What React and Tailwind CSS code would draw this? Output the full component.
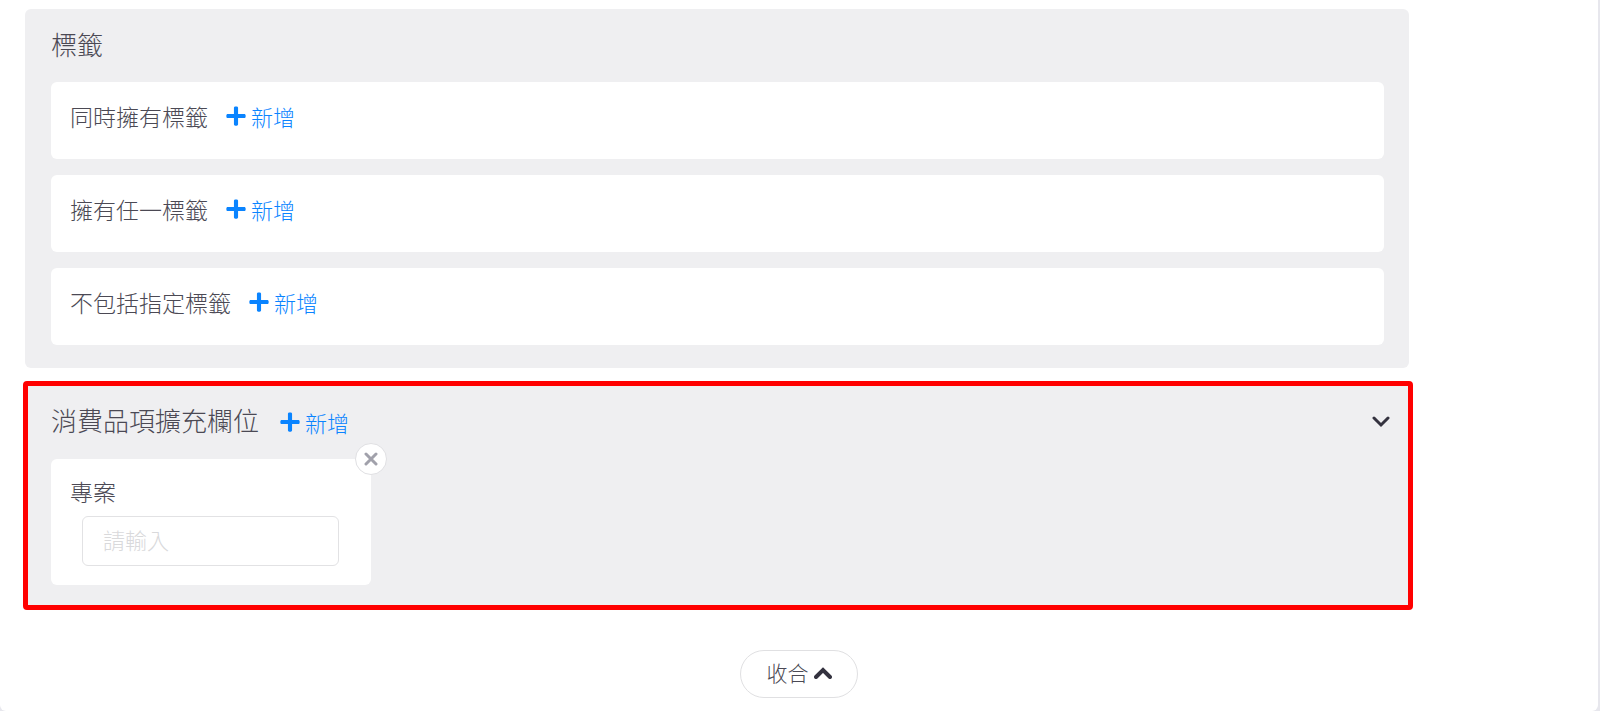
import { useState } from "react";
import { FaPlus } from "react-icons/fa";

const tagGroups = ["同時擁有標籤", "擁有任一標籤", "不包括指定標籤"];

function AddButton() {
  return (
    <button type="button" className="flex items-center gap-1 text-[22px] leading-8 text-[#0a84ff]">
      <FaPlus className="size-[22px]" aria-hidden="true" />
      新增
    </button>
  );
}

function Chevron({ up = false, className }) {
  return (
    <svg
      viewBox="0 0 18 12"
      fill="none"
      stroke="currentColor"
      strokeLinecap="round"
      strokeLinejoin="miter"
      className={className}
      aria-hidden="true"
    >
      <path d={up ? "M2 10L9 3L16 10" : "M2 2L9 9L16 2"} />
    </svg>
  );
}

function TagCard({ label }) {
  return (
    <div className="flex h-[77px] items-start gap-[17px] rounded-md bg-white px-[19px] pt-[18px]">
      <span className="text-[23px] leading-8">{label}</span>
      <AddButton />
    </div>
  );
}

function FieldCard({ name, onRemove }) {
  const [value, setValue] = useState("");

  return (
    <div className="relative w-80 rounded-md bg-white px-[19px] pt-4 pb-[19px]">
      <label htmlFor="field-value" className="block text-[23px] leading-8">
        {name}
      </label>
      <input
        id="field-value"
        type="text"
        placeholder="請輸入"
        value={value}
        onChange={(e) => setValue(e.target.value)}
        className="mt-[9px] ml-3 block h-[50px] w-[257px] rounded-md border border-[#e2e2e4] px-5 pb-1 text-[22px] placeholder:text-[#d9d9db] focus:outline-none"
      />
      <button
        type="button"
        aria-label="移除"
        onClick={onRemove}
        className="absolute -top-4 -right-4 flex size-8 items-center justify-center rounded-full border border-[#e0e0e3] bg-white text-[#a1a1ab]"
      >
        <svg viewBox="0 0 14 14" className="size-[14px]" fill="none" stroke="currentColor" strokeWidth="3" strokeLinecap="round" aria-hidden="true">
          <path d="M2 2L12 12M12 2L2 12" />
        </svg>
      </button>
    </div>
  );
}

export default function App() {
  const [fields, setFields] = useState(["專案"]);
  const [open, setOpen] = useState(true);

  return (
    <div className="min-h-screen bg-[#e7e7ed] pr-[2px] font-['Noto_Sans_CJK_TC',sans-serif] font-light text-[#4b4954]">
      <main className="flex min-h-screen flex-col rounded-b-md bg-white pb-3">
        <div className="mr-[185px] ml-[23px] flex flex-col gap-[13px] pt-[9px]">
          <section className="mr-1 ml-[2px] rounded-md bg-[#efeff1] pt-[17px] pr-[25px] pb-[23px] pl-[26px]">
            <h2 className="text-[26px] leading-9">標籤</h2>
            <div className="mt-5 flex flex-col gap-4">
              {tagGroups.map((label) => (
                <TagCard key={label} label={label} />
              ))}
            </div>
          </section>

          <section className="rounded-sm border-5 border-[#ff0000] bg-[#efeff1] pt-4 pr-[18px] pb-5 pl-[23px]">
            <div className="flex items-end gap-5">
              <h2 className="text-[26px] leading-9">消費品項擴充欄位</h2>
              <AddButton />
              <button
                type="button"
                aria-label="展開或收合欄位"
                onClick={() => setOpen(!open)}
                className="ml-auto flex h-8 items-center"
              >
                <Chevron className="h-3 w-[18px] stroke-3 text-[#34323f]" />
              </button>
            </div>
            {open && (
              <div className="mt-[21px] flex flex-wrap gap-8">
                {fields.map((name) => (
                  <FieldCard
                    key={name}
                    name={name}
                    onRemove={() => setFields(fields.filter((f) => f !== name))}
                  />
                ))}
              </div>
            )}
          </section>
        </div>

        <button
          type="button"
          className="mx-auto mt-10 flex h-12 w-[118px] items-center justify-center gap-[5px] rounded-full border border-[#e0e0e2] pb-[2px] text-[21px]"
        >
          收合
          <Chevron up className="h-3 w-[18px] stroke-4 text-[#34323f]" />
        </button>
      </main>
    </div>
  );
}
